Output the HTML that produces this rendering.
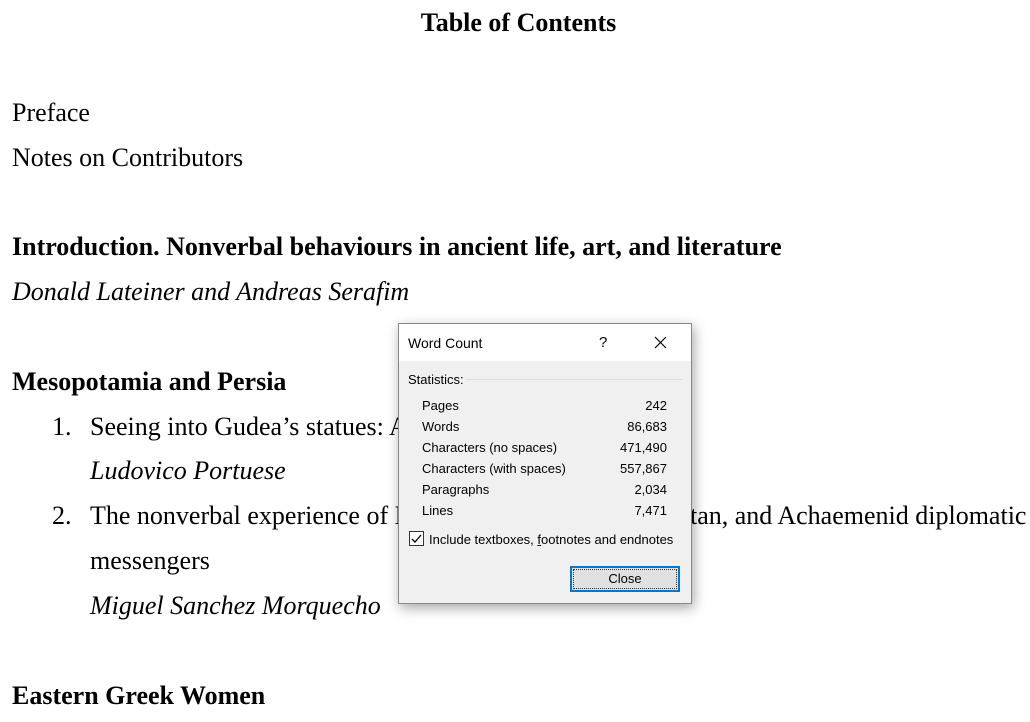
<!DOCTYPE html>
<html><head><style>
body{margin:0;width:1030px;height:722px;background:#fff;overflow:hidden;position:relative;font-family:"Liberation Serif",serif;font-size:26px;color:#000}
.l{position:absolute;white-space:nowrap;line-height:30px;transform:translateY(-14px)}
b{font-weight:bold}
.dlg{position:absolute;left:398px;top:323px;width:292px;height:279px;background:#f0f0f0;border:1px solid #888;box-shadow:2px 4px 12px rgba(0,0,0,.35);font-family:"Liberation Sans",sans-serif;font-size:13px;color:#000}
.tb{height:37px;background:#fff;position:relative}
.d{position:absolute;white-space:nowrap}
</style></head><body>
<div class="l" style="left:0;width:1037px;text-align:center;top:22px"><b>Table of Contents</b></div>
<div class="l" style="left:12px;top:112px">Preface</div>
<div class="l" style="left:12px;top:157px">Notes on Contributors</div>
<div class="l" style="left:12px;top:246px"><b>Introduction. Nonverbal behaviours in ancient life, art, and literature</b></div>
<div class="l" style="left:12px;top:291px"><i>Donald Lateiner and Andreas Serafim</i></div>
<div class="l" style="left:12px;top:381px"><b>Mesopotamia and Persia</b></div>
<div class="l" style="left:52px;top:426px">1.</div>
<div class="l" style="left:90px;top:426px">Seeing into Gudea’s statues: A</div>
<div class="l" style="left:90px;top:470px"><i>Ludovico Portuese</i></div>
<div class="l" style="left:52px;top:515px">2.</div>
<div class="l" style="left:90px;top:515px">The nonverbal experience of N</div>
<div class="l" style="left:690px;top:515px">tan, and Achaemenid diplomatic</div>
<div class="l" style="left:90px;top:560px">messengers</div>
<div class="l" style="left:90px;top:605px"><i>Miguel Sanchez Morquecho</i></div>
<div class="l" style="left:12px;top:695px"><b>Eastern Greek Women</b></div>

<div class="dlg">
<div class="tb">
<div class="d" style="left:9px;top:11px;font-size:14px">Word Count</div>
<div class="d" style="left:200px;top:10px;font-size:15px">?</div>
<svg class="d" style="left:255px;top:12px" width="13" height="13"><path d="M1 1L12 12M12 1L1 12" stroke="#000" stroke-width="1.2"/></svg>
</div>
<div class="d" style="left:9px;top:48px">Statistics:</div>
<div class="d" style="left:67px;top:55px;width:217px;height:1px;background:#ddd"></div>
<div class="d" style="left:23px;top:71px;line-height:21px">Pages<br>Words<br>Characters (no spaces)<br>Characters (with spaces)<br>Paragraphs<br>Lines</div>
<div class="d" style="right:24px;top:71px;line-height:21px;text-align:right">242<br>86,683<br>471,490<br>557,867<br>2,034<br>7,471</div>
<div class="d" style="left:10px;top:207px;width:13px;height:13px;border:1px solid #333;background:#fff"><svg width="13" height="13" style="position:absolute;left:0;top:0"><path d="M2 7L5 10L11 3" stroke="#000" stroke-width="1.3" fill="none"/></svg></div>
<div class="d" style="left:30px;top:208px">Include textboxes, <u>f</u>ootnotes and endnotes</div>
<div class="d" style="left:171px;top:242px;width:110px;height:26px;border:2px solid #0078d7;background:#e1e1e1;box-sizing:border-box;text-align:center;line-height:22px"><div style="position:absolute;inset:1px;border:1px dotted #333"></div>Close</div>
</div>
</body></html>
